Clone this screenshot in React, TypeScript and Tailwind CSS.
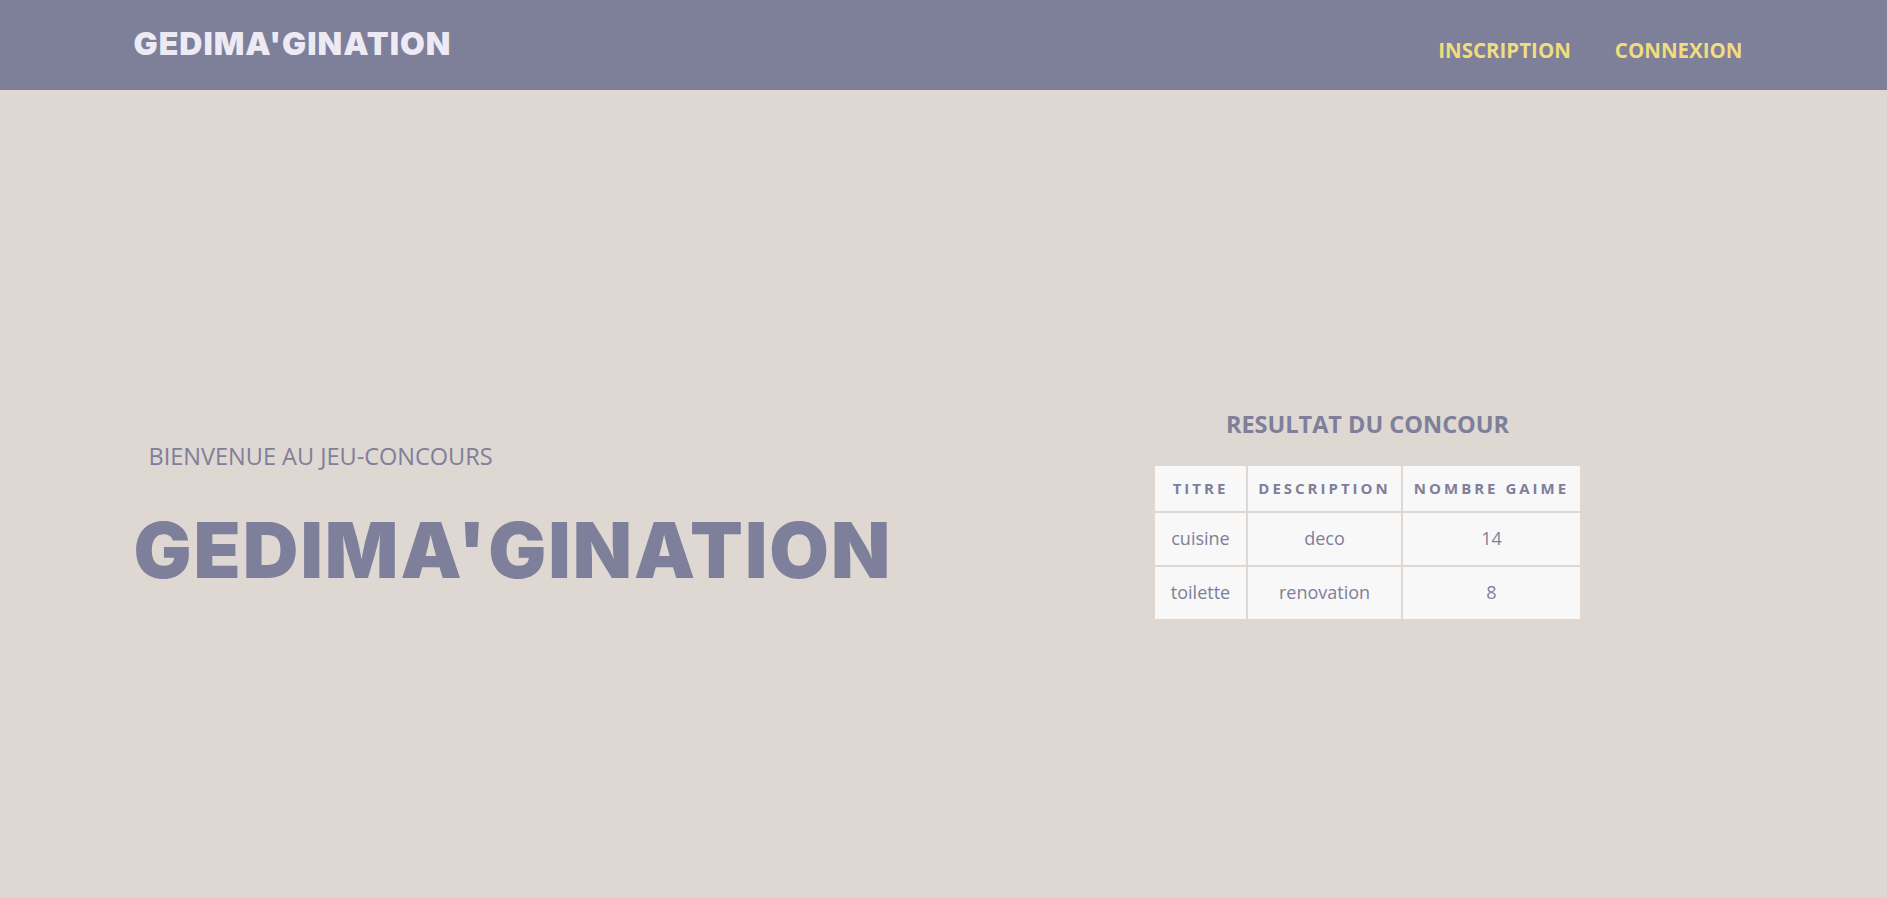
export default function App() {
  const rows = [
    { titre: 'cuisine', description: 'deco', likes: 14 },
    { titre: 'toilette', description: 'renovation', likes: 8 },
  ];

  return (
    <div className="min-h-screen bg-[#ded7d2] text-[#7e7f9a] font-['Open_Sans',sans-serif]">
      <header className="h-[90px] bg-[#7e7f99]">
        <div className="mx-auto w-[1620px] flex justify-between items-start">
          <a className="mt-[28px] text-[32px] leading-none font-black tracking-[1px] text-[#eeeaf4] font-['Inter','Liberation_Sans',sans-serif]">
            GEDIMA'GINATION
          </a>
          <nav className="mt-[38px] mr-[11px] flex gap-[44px] text-[20.5px] leading-[24px] font-bold text-[#f2dc80]">
            <a>INSCRIPTION</a>
            <a>CONNEXION</a>
          </nav>
        </div>
      </header>

      <section className="h-[807px] pt-[43px] flex items-center">
        <div className="mx-auto w-[1620px] grid grid-cols-[848px_1fr] items-center">
          <div>
            <p className="pl-[15px] text-[23.5px] leading-[30px]">BIENVENUE AU JEU-CONCOURS</p>
            <h1 className="mt-[41px] text-[77px] leading-none font-black tracking-[2px] font-['Inter','Liberation_Sans',sans-serif]">
              GEDIMA'GINATION
            </h1>
          </div>

          <div className="flex flex-col items-center">
            <h2 className="text-[23.5px] leading-[29px] font-bold">RESULTAT DU CONCOUR</h2>
            <table className="mt-[25px] border-separate border-spacing-[2px] text-center">
              <thead>
                <tr>
                  <th className="w-[91px] h-[45px] p-0 bg-[#f8f8f8] text-[15px] font-bold tracking-[3px]">TITRE</th>
                  <th className="w-[153px] h-[45px] p-0 bg-[#f8f8f8] text-[15px] font-bold tracking-[3px]">DESCRIPTION</th>
                  <th className="w-[177px] h-[45px] p-0 bg-[#f8f8f8] text-[15px] font-bold tracking-[3px]">NOMBRE GAIME</th>
                </tr>
              </thead>
              <tbody>
                {rows.map((r) => (
                  <tr key={r.titre}>
                    <td className="h-[52px] p-0 bg-[#f8f8f8] text-[18px]">{r.titre}</td>
                    <td className="h-[52px] p-0 bg-[#f8f8f8] text-[18px]">{r.description}</td>
                    <td className="h-[52px] p-0 bg-[#f8f8f8] text-[18px]">{r.likes}</td>
                  </tr>
                ))}
              </tbody>
            </table>
          </div>
        </div>
      </section>
    </div>
  );
}
